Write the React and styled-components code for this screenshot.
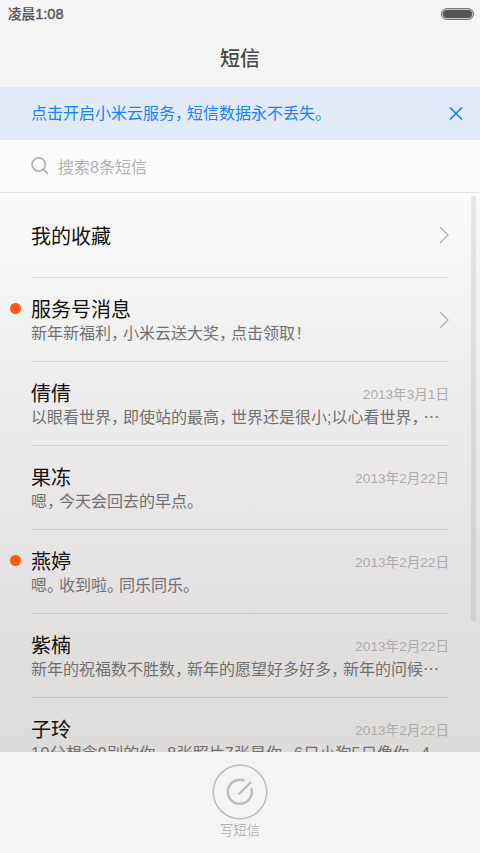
import React from "react";
import styled, { createGlobalStyle, css } from "styled-components";

const cjk = '"Noto Sans CJK SC"';

const GlobalStyle = createGlobalStyle`
  * { box-sizing: border-box; }
  body {
    margin: 0;
    background: #f5f5f5;
    font-family: "Liberation Sans", ${cjk}, sans-serif;
  }
`;

const Screen = styled.div`
  width: 480px;
  height: 853px;
  display: flex;
  flex-direction: column;
  overflow: hidden;
  background: #f5f5f5;
`;

const StatusBar = styled.header`
  height: 27px;
  padding: 0 6px 0 8px;
  display: flex;
  align-items: center;
  justify-content: space-between;
  color: #555;
  font-size: 13.6px;
  font-weight: 500;
  line-height: 26px;
`;

const Clock = styled.span`
  height: 27px;
  font-family: ${cjk}, sans-serif;
  -webkit-text-stroke: 0.2px #555;
`;

const Digits = styled.span`
  font-family: "Liberation Sans", sans-serif;
  font-size: 14.6px;
  -webkit-text-stroke: 0.4px #555;
`;

const Battery = styled.div`
  width: 33px;
  height: 12px;
  padding: 1px;
  border: 1px solid #777;
  border-radius: 6px;
  background: #c4c4c4;
`;

const Charge = styled.div`
  height: 100%;
  border-radius: 4px;
  background: #555;
`;

const Title = styled.h1`
  height: 60px;
  margin: 0;
  text-align: center;
  color: #484848;
  font-family: ${cjk}, sans-serif;
  font-size: 20px;
  font-weight: 500;
  line-height: 61px;
`;

const Banner = styled.div`
  height: 53px;
  padding: 0 17px 0 31px;
  display: flex;
  align-items: center;
  justify-content: space-between;
  background: #e2eaf8;
  color: #1782f5;
  font-size: 16px;
`;

const BannerText = styled.span`
  padding-bottom: 3px;
`;

const Body = styled.main`
  flex: 1;
  min-height: 0;
  display: flex;
  flex-direction: column;
  background: linear-gradient(
    #fcfcfc 0,
    #fafafa 60px,
    #f5f5f5 140px,
    #efeeee 240px,
    #e9e7e8 350px,
    #e4e2e2 440px,
    #dddcda 612px
  );
`;

const Search = styled.div`
  flex: none;
  height: 53px;
  padding-left: 31px;
  display: flex;
  align-items: center;
  gap: 9px;
  border-bottom: 1px solid #e6e6e6;
  color: #b1b1b1;
  font-size: 16px;
`;

const ListArea = styled.div`
  flex: 1;
  min-height: 0;
  display: flex;
  justify-content: space-between;
  overflow: hidden;
`;

const List = styled.ul`
  width: 449px;
  margin: 0;
  padding: 0;
  list-style: none;
`;

const ScrollThumb = styled.div`
  width: 5px;
  height: 425px;
  margin: 3px 4px 0 0;
  border-radius: 3px;
  background: rgba(0, 0, 0, 0.08);
`;

const Row = styled.li`
  height: ${(p) => (p.$first ? 85 : 84)}px;
  display: grid;
  grid-template-columns: 31px 418px;
`;

const Marker = styled.div`
  padding: 25px 0 0 10px;
`;

const UnreadDot = styled.div`
  width: 11px;
  height: 11px;
  border-radius: 50%;
  background: #fd5814;
`;

const Content = styled.div`
  min-width: 0;
  display: flex;
  align-items: center;
  border-bottom: 1px solid rgba(60, 50, 50, 0.13);
`;

const Texts = styled.div`
  flex: 1;
  min-width: 0;
  ${(p) =>
    !p.$single &&
    css`
      align-self: flex-start;
      padding-top: 17px;
    `}
`;

const Heading = styled.div`
  height: 27px;
  display: flex;
  justify-content: space-between;
`;

const Name = styled.span`
  color: #111;
  font-family: ${cjk}, sans-serif;
  font-size: 20px;
  line-height: 28px;
`;

const DateText = styled.time`
  color: #adacac;
  font-size: 13.6px;
  line-height: 20px;
  padding-top: 6px;
`;

const Preview = styled.div`
  height: 24px;
  color: #707070;
  font-size: 16px;
  line-height: 20px;
  white-space: nowrap;
`;

const Mark = styled.span`
  font-family: ${cjk}, sans-serif;
  letter-spacing: ${(p) => (p.$full ? 0 : -4)}px;
`;

const Numeral = styled.span`
  letter-spacing: 0.5px;
`;

const Exclamation = styled.span`
  padding-left: 2px;
`;

const Chevron = styled.svg`
  flex: none;
  width: 10px;
  height: 18px;
  fill: none;
  stroke: #b0b0b0;
  stroke-width: 1.3;
`;

const Footer = styled.footer`
  flex: none;
  height: 101px;
  padding-top: 12px;
  display: flex;
  flex-direction: column;
  align-items: center;
  background: #f5f5f5;
  color: #b6b6b6;
  font-size: 13.3px;
  line-height: 20px;
`;

const ComposeIcon = styled.svg`
  width: 56px;
  height: 56px;
  margin-bottom: 1px;
  fill: none;
  stroke: #bcbcbc;
`;

const Icon = styled.svg`
  flex: none;
  display: block;
  fill: none;
  stroke: currentColor;
`;

function Rich({ children }) {
  return children.split(/([，。…!]|\d+)/).map((part, i) => {
    if (i % 2 === 0) return part;
    if (/\d/.test(part)) return <Numeral key={i}>{part}</Numeral>;
    if (part === "!") return <Exclamation key={i}>!</Exclamation>;
    return (
      <Mark key={i} $full={part === "…"}>
        {part}
      </Mark>
    );
  });
}

const rows = [
  { name: "我的收藏", link: true },
  { name: "服务号消息", text: "新年新福利，小米云送大奖，点击领取!", link: true, unread: true },
  { name: "倩倩", date: "2013年3月1日", text: "以眼看世界，即使站的最高，世界还是很小;以心看世界，…" },
  { name: "果冻", date: "2013年2月22日", text: "嗯，今天会回去的早点。" },
  { name: "燕婷", date: "2013年2月22日", text: "嗯。收到啦。同乐同乐。", unread: true },
  { name: "紫楠", date: "2013年2月22日", text: "新年的祝福数不胜数，新年的愿望好多好多，新年的问候…" },
  { name: "子玲", date: "2013年2月22日", text: "10分想念9别的你，8张照片7张是你，6只小狗5只像你，4" },
];

function MessageRow({ item, first }) {
  return (
    <Row $first={first}>
      <Marker>{item.unread && <UnreadDot />}</Marker>
      <Content>
        <Texts $single={!item.text}>
          <Heading>
            <Name>{item.name}</Name>
            {item.date && <DateText>{item.date}</DateText>}
          </Heading>
          {item.text && (
            <Preview>
              <Rich>{item.text}</Rich>
            </Preview>
          )}
        </Texts>
        {item.link && (
          <Chevron viewBox="0 0 10 18">
            <path d="M1 1l8 8-8 8" />
          </Chevron>
        )}
      </Content>
    </Row>
  );
}

export default function App() {
  return (
    <Screen lang="zh-CN">
      <GlobalStyle />
      <StatusBar>
        <Clock>
          凌晨<Digits>1:08</Digits>
        </Clock>
        <Battery>
          <Charge />
        </Battery>
      </StatusBar>
      <Title>短信</Title>
      <Banner>
        <BannerText>
          <Rich>点击开启小米云服务，短信数据永不丢失。</Rich>
        </BannerText>
        <Icon width="14" height="14" viewBox="0 0.5 14 14" strokeWidth="1.7">
          <path d="M1 1l12 12M13 1L1 13" />
        </Icon>
      </Banner>
      <Body>
        <Search>
          <Icon width="18" height="18" viewBox="0 0 18 18" strokeWidth="1.8">
            <circle cx="7.7" cy="7.5" r="6.6" />
            <path d="M12.4 12.2l4.6 4.6" />
          </Icon>
          <span>搜索8条短信</span>
        </Search>
        <ListArea>
          <List>
            {rows.map((item, i) => (
              <MessageRow key={item.name} item={item} first={i === 0} />
            ))}
          </List>
          <ScrollThumb />
        </ListArea>
      </Body>
      <Footer>
        <ComposeIcon viewBox="0 0 56 56">
          <circle cx="28" cy="28" r="26.7" strokeWidth="1.5" />
          <path d="M32.3 16.6A12 12 0 1 0 39.2 23.8" strokeWidth="2.4" />
          <path d="M26.5 30.5L39 18" strokeWidth="2.4" />
        </ComposeIcon>
        <span>写短信</span>
      </Footer>
    </Screen>
  );
}
